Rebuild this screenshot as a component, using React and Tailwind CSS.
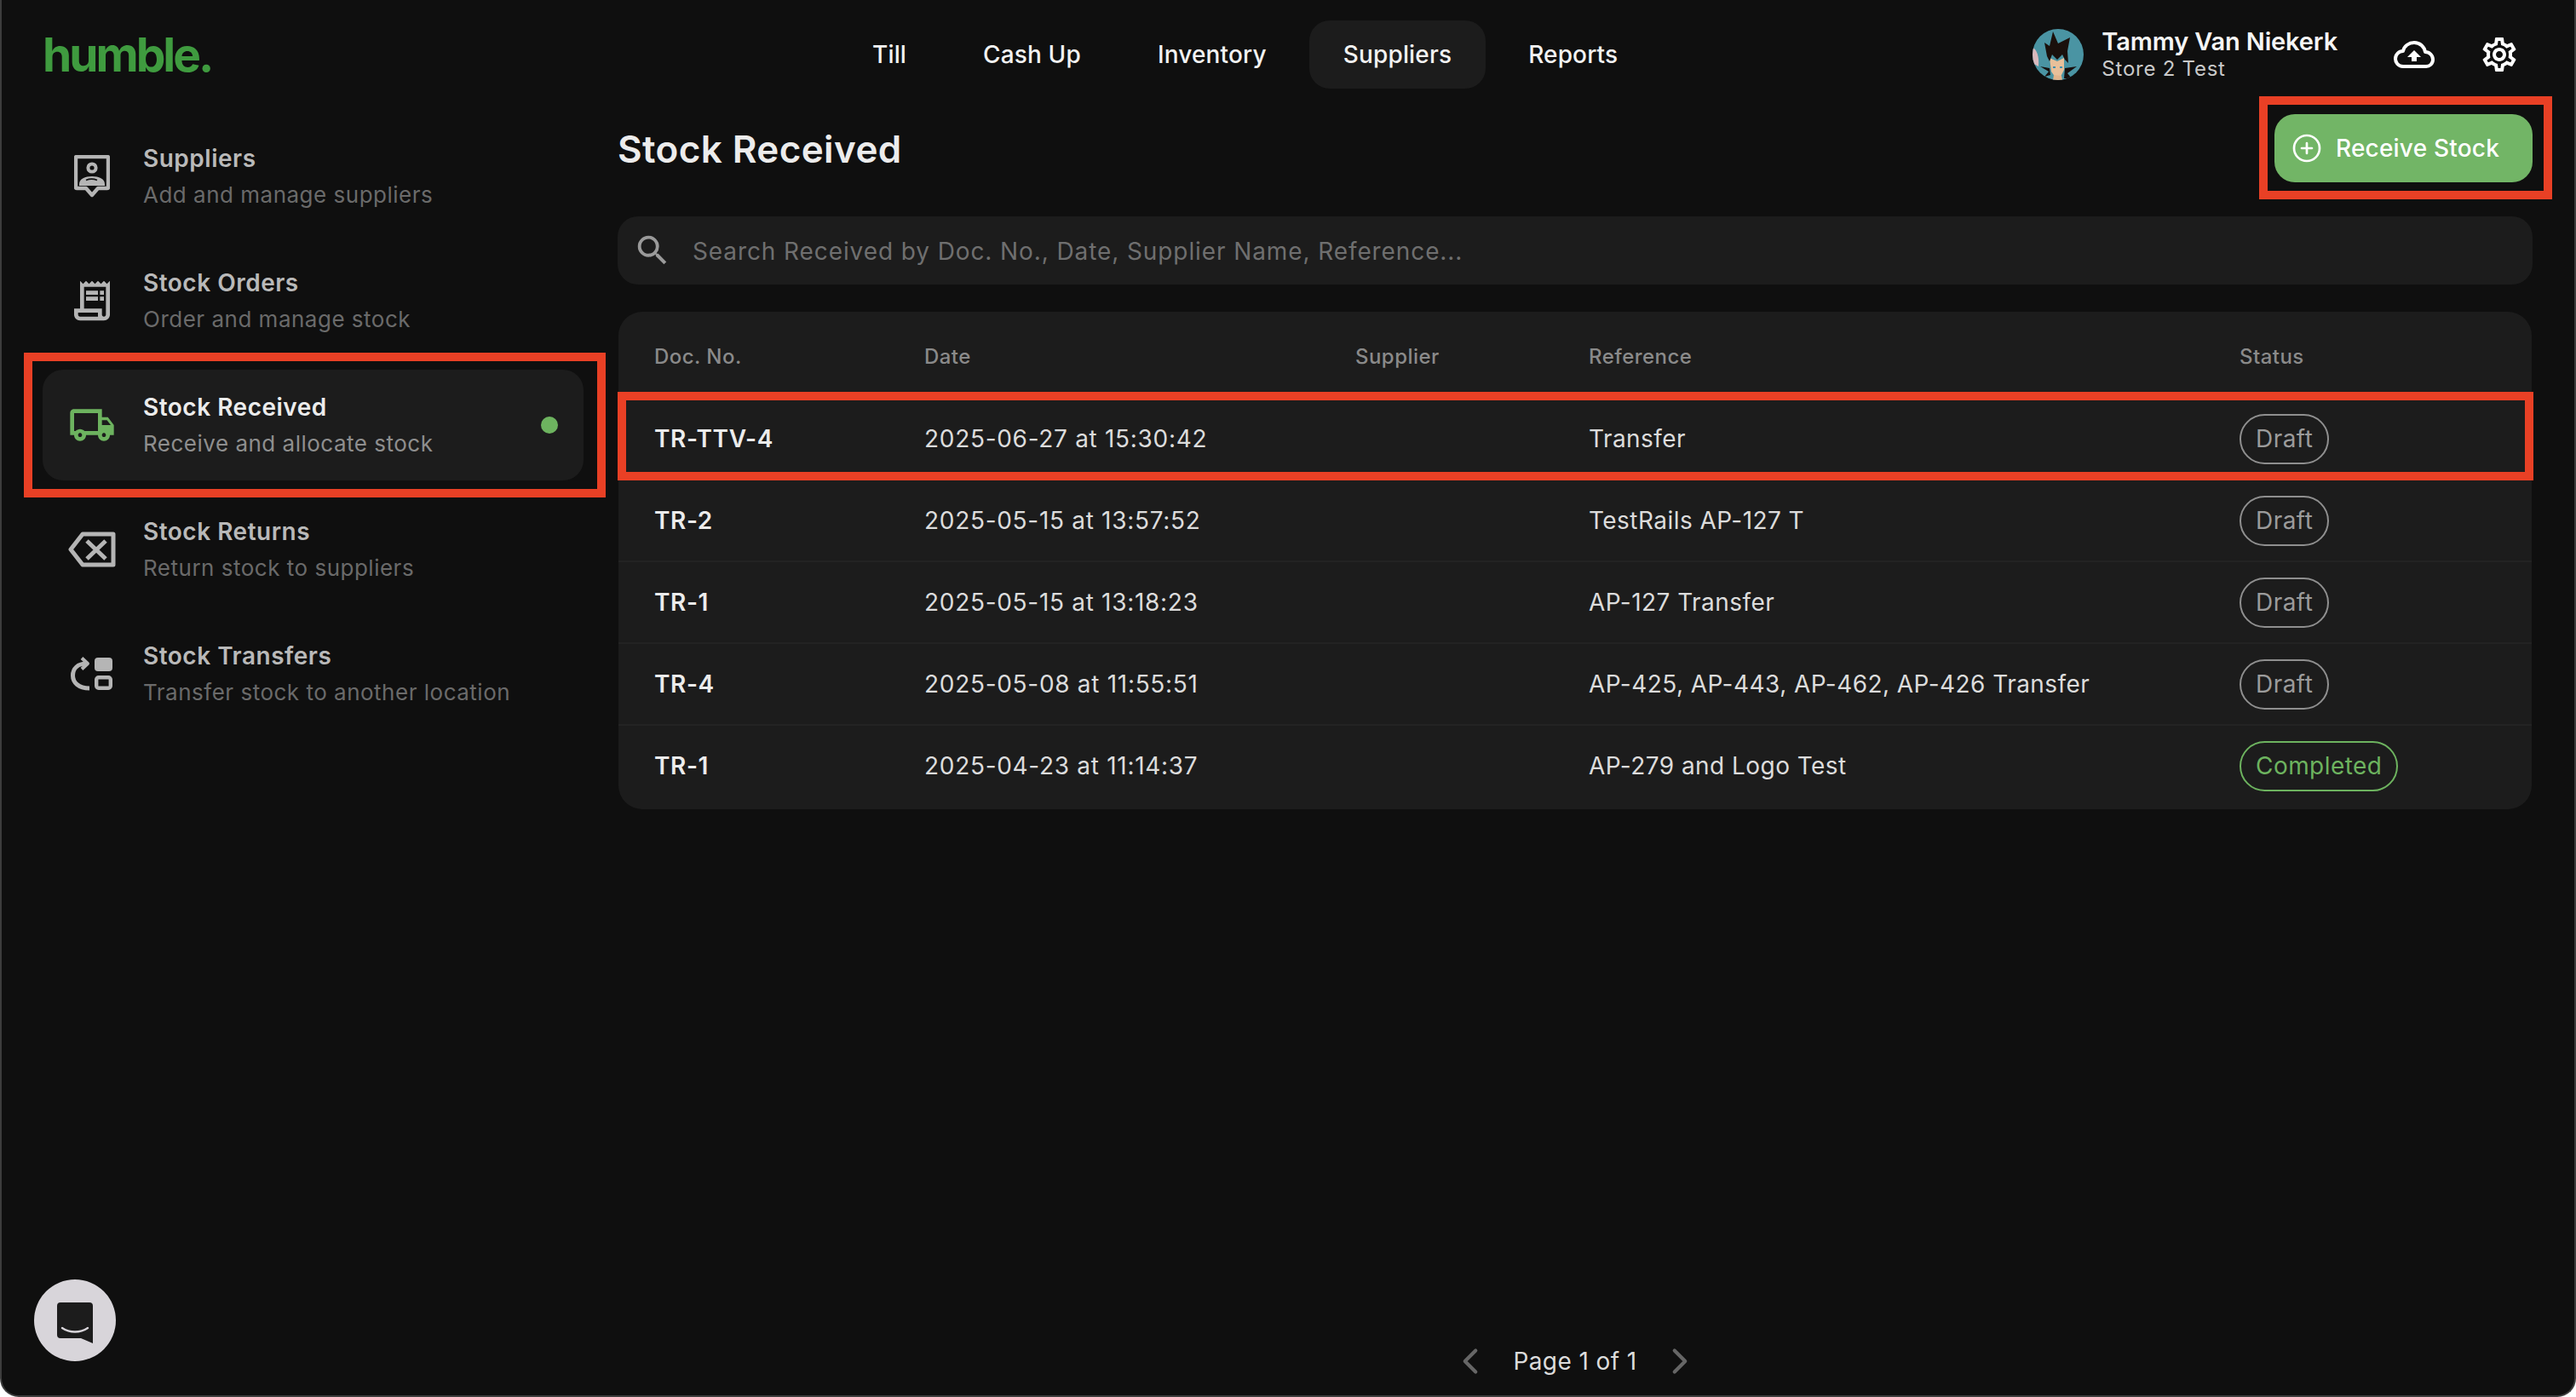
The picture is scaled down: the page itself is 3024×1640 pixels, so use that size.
import React from 'react';
import { CirclePlus, ChevronLeft, ChevronRight } from 'lucide-react';
import { MdOutlineLocalShipping, MdOutlineReceiptLong, MdOutlineSettings, MdSearch } from 'react-icons/md';

const SuppliersIcon = () => (
    <svg width="42" height="50" viewBox="0 0 42 50" fill="none" stroke="currentColor">
        <path d="M3 2h36a1 1 0 0 1 1 1v35a1 1 0 0 1-1 1H28l-7 8-7-8H3a1 1 0 0 1-1-1V3a1 1 0 0 1 1-1z" strokeWidth="4.4" strokeLinejoin="round" />
        <circle cx="21" cy="15" r="4.6" strokeWidth="4" />
        <path d="M6 36v-2c0-6 7-9 15-9s15 3 15 9v2z" fill="currentColor" stroke="none" />
        <path d="M14 29.5c4-1.6 9-1.6 13 0" stroke="#0f0f0f" strokeWidth="1.8" />
    </svg>
);

const ReturnsIcon = () => (
    <svg width="56" height="42" viewBox="0 0 56 42" fill="none" stroke="currentColor">
        <path d="M53 3H17L3 21l14 18h36z" strokeWidth="5" strokeLinejoin="round" />
        <path d="M22 11l22 21M44 11L22 32" strokeWidth="5" />
    </svg>
);

const TransfersIcon = () => (
    <svg width="50" height="40" viewBox="0 0 50 40" fill="none" stroke="currentColor">
        <rect x="28" y="1" width="21" height="16" rx="4" fill="currentColor" stroke="none" />
        <rect x="30.2" y="24.2" width="16.6" height="12.6" rx="2.5" strokeWidth="4.4" />
        <path d="M22 37C9 37 2.5 30 2.5 22C2.5 14 8 8 19 8" strokeWidth="5" />
        <path d="M13 1.5l7 6.5-7 6.5" strokeWidth="4" strokeLinejoin="round" />
    </svg>
);

const CloudIcon = () => (
    <svg width="48" height="32" viewBox="0 0 48 32" fill="none">
        <path d="M11 30C5 30 2 25 2 21C2 16 6 12 11 12C12 6 18 2 24 2C31 2 36 7 37 13C42 13 46 17 46 22C46 27 42 30 38 30Z" stroke="currentColor" strokeWidth="4" strokeLinejoin="round" />
        <path d="M24 11l8 8h-5v5h-6v-5h-5z" fill="currentColor" />
    </svg>
);

const ChatIcon = () => (
    <svg width="42" height="48" viewBox="0 0 42 48" fill="none">
        <path d="M4 0h34a4 4 0 0 1 4 4v44l-14-6H4a4 4 0 0 1-4-4V4a4 4 0 0 1 4-4z" fill="#1c1c1c" />
        <path d="M6 30c9 6 21 6 30 0" stroke="#d8d5da" strokeWidth="2.4" strokeLinecap="round" />
    </svg>
);

const Avatar = () => (
    <svg width="60" height="60" viewBox="0 0 60 60" className="rounded-full">
        <rect width="60" height="60" fill="#4a94a3" />
        <path d="M0 22c5 2 8 10 7 22L0 40z" fill="#d9b9bd" />
        <path d="M9 44l11 2 1 8-7 2 5-6z" fill="#17100e" />
        <path d="M52 44l-14 2-1 12h9l-5-6z" fill="#17100e" />
        <path d="M20 34l9 4 8-4v14l-4 8-6 1-5-7z" fill="#e8c09a" />
        <path d="M24 60l1-6 9 1 1 5z" fill="#e0b48c" />
        <path d="M24 45h3M32 45h3" stroke="#3f8fae" strokeWidth="2" />
        <path d="M24 3l6 14 14-7-3 16 1 14-4-4-3-6-6 6-6-6-3 8-3-6-3-16 6 4z" fill="#1a100c" />
    </svg>
);

const navItems = ['Till', 'Cash Up', 'Inventory', 'Suppliers', 'Reports'];

const sideItems = [
    { title: 'Suppliers', sub: 'Add and manage suppliers', icon: <SuppliersIcon /> },
    { title: 'Stock Orders', sub: 'Order and manage stock', icon: <MdOutlineReceiptLong size={56} /> },
    { title: 'Stock Received', sub: 'Receive and allocate stock', icon: <MdOutlineLocalShipping size={56} />, active: true },
    { title: 'Stock Returns', sub: 'Return stock to suppliers', icon: <ReturnsIcon /> },
    { title: 'Stock Transfers', sub: 'Transfer stock to another location', icon: <TransfersIcon /> },
];

const rows = [
    { doc: 'TR-TTV-4', date: '2025-06-27 at 15:30:42', ref: 'Transfer', status: 'Draft', marked: true },
    { doc: 'TR-2', date: '2025-05-15 at 13:57:52', ref: 'TestRails AP-127 T', status: 'Draft' },
    { doc: 'TR-1', date: '2025-05-15 at 13:18:23', ref: 'AP-127 Transfer', status: 'Draft' },
    { doc: 'TR-4', date: '2025-05-08 at 11:55:51', ref: 'AP-425, AP-443, AP-462, AP-426 Transfer', status: 'Draft' },
    { doc: 'TR-1', date: '2025-04-23 at 11:14:37', ref: 'AP-279 and Logo Test', status: 'Completed' },
];

const columns = 'grid grid-cols-[317px_506px_274px_764px_1fr] pl-[42px] items-center';

function SideItem({ item }) {
    const box = (
        <div className={`flex h-[130px] items-center rounded-[24px] pl-[26px] pr-[30px] ${item.active ? 'bg-[#1c1c1c]' : ''}`}>
            <div className={`flex w-[64px] shrink-0 justify-center ${item.active ? 'text-[#6db35f]' : 'text-[#b5b5b5]'}`}>{item.icon}</div>
            <div className="ml-[28px] flex-1">
                <div className={`text-[28px] font-semibold leading-[40px] tracking-[0.5px] ${item.active ? 'text-[#ececec]' : 'text-[#b9b9b9]'}`}>{item.title}</div>
                <div className={`mt-[4px] text-[26px] leading-[38px] tracking-[0.5px] ${item.active ? 'text-[#8e8e8e]' : 'text-[#6a6a6a]'}`}>{item.sub}</div>
            </div>
            {item.active && <div className="h-[20px] w-[20px] rounded-full bg-[#6db35f]" />}
        </div>
    );
    if (!item.active) return box;
    return (
        <div className="relative">
            {box}
            <div className="pointer-events-none absolute -left-[22px] -right-[26px] -inset-y-[20px] border-[10px] border-[#e94025]" />
        </div>
    );
}

function Row({ row }) {
    const done = row.status === 'Completed';
    return (
        <div className={`relative ${columns} h-[96px] border-b-2 text-[28px] tracking-[0.45px] text-[#dcdcdc] ${done ? 'border-transparent' : 'border-[#232323]'}`}>
            <div className="font-semibold tracking-[0.6px] text-[#ececec]">{row.doc}</div>
            <div className="tracking-[0.7px]">{row.date}</div>
            <div />
            <div>{row.ref}</div>
            <div>
                <span className={`inline-flex h-[59px] items-center rounded-full border-2 px-[17px] ${done ? 'border-[#6db35f] text-[#6db35f]' : 'border-[#8f8f8f] text-[#9b9b9b]'}`}>{row.status}</span>
            </div>
            {row.marked && <div className="pointer-events-none absolute -left-[1px] -right-[2px] -top-[8px] -bottom-[2px] border-[10px] border-[#e94025]" />}
        </div>
    );
}

export default function App() {
    return (
        <div className="relative flex h-[1640px] w-[3024px] flex-col overflow-hidden rounded-b-[22px] border-x-2 border-b-2 border-[#3d3d3d] bg-[#0f0f0f] font-[Inter,sans-serif] text-white">
            {/* top bar */}
            <header className="flex h-[128px] shrink-0 items-center">
                <div className="w-[982px] pl-[48px] text-[55px] font-bold leading-none tracking-[-3px] text-[#3f9b3f]">humble.</div>
                <nav className="flex gap-[10px]">
                    {navItems.map((n) => (
                        <div key={n} className={`flex h-[80px] items-center rounded-[24px] px-[40px] text-[28px] font-medium tracking-[0.15px] text-[#f2f2f2] ${n === 'Suppliers' ? 'bg-[#1c1c1c]' : ''}`}>{n}</div>
                    ))}
                </nav>
                <div className="ml-auto flex items-center pr-[64px]">
                    <Avatar />
                    <div className="ml-[21px] pb-[3px]">
                        <div className="text-[29px] font-semibold leading-[36px] tracking-[-0.15px] text-[#f5f5f5]">Tammy Van Niekerk</div>
                        <div className="text-[24px] leading-[28px] tracking-[0.75px] text-[#c9c9c9]">Store 2 Test</div>
                    </div>
                    <div className="ml-[66px] text-white"><CloudIcon /></div>
                    <MdOutlineSettings size={48} className="ml-[52px] text-white" />
                </div>
            </header>

            <div className="flex min-h-0 flex-1">
                {/* left menu */}
                <aside className="flex w-[723px] shrink-0 flex-col gap-[16px] pl-[48px] pr-[40px] pt-[14px]">
                    {sideItems.map((item) => <SideItem key={item.title} item={item} />)}
                </aside>

                <main className="flex min-w-0 flex-1 flex-col pr-[49px] pt-[6px]">
                    <div className="flex h-[80px] items-center justify-between">
                        <h1 className="pt-[2px] text-[44px] font-semibold tracking-[0.4px] text-[#ececec]">Stock Received</h1>
                        <div className="relative">
                            <button className="flex h-[80px] w-[303px] items-center rounded-[24px] bg-[#72b566] pl-[20px] text-[28px] font-medium tracking-[0.2px] text-white">
                                <CirclePlus size={36} strokeWidth={1.8} />
                                <span className="ml-[16px]">Receive Stock</span>
                            </button>
                            <div className="pointer-events-none absolute -left-[18px] -right-[23px] -top-[21px] -bottom-[20px] border-[10px] border-[#e94025]" />
                        </div>
                    </div>

                    <div className="mt-[40px] flex h-[80px] items-center rounded-[24px] bg-[#1c1c1c] pl-[18px]">
                        <MdSearch size={46} className="text-[#9a9a9a]" />
                        <span className="ml-[24px] pt-[2px] text-[28px] tracking-[0.9px] text-[#6f6f6f]">Search Received by Doc. No., Date, Supplier Name, Reference...</span>
                    </div>

                    <section className="mx-[1px] mt-[32px] rounded-[28px] bg-[#1c1c1c] pb-[2px]">
                        <div className={`${columns} h-[102px] pt-[4px] text-[24px] font-medium tracking-[0.45px] text-[#8a8a8a]`}>
                            <div>Doc. No.</div>
                            <div>Date</div>
                            <div>Supplier</div>
                            <div>Reference</div>
                            <div>Status</div>
                        </div>
                        {rows.map((row, i) => <Row key={i} row={row} />)}
                    </section>

                    <div className="mt-auto flex h-[64px] items-center justify-center pb-[16px] text-[28px] tracking-[0.4px] text-[#dcdcdc]">
                        <ChevronLeft size={50} strokeWidth={2} className="text-[#666666]" />
                        <span className="mx-[25px]">Page 1 of 1</span>
                        <ChevronRight size={50} strokeWidth={2} className="text-[#666666]" />
                    </div>
                </main>
            </div>

            {/* chat launcher */}
            <button className="absolute bottom-[40px] left-[38px] flex h-[96px] w-[96px] items-center justify-center rounded-full bg-[#d8d5da] pt-[6px]">
                <ChatIcon />
            </button>
        </div>
    );
}
